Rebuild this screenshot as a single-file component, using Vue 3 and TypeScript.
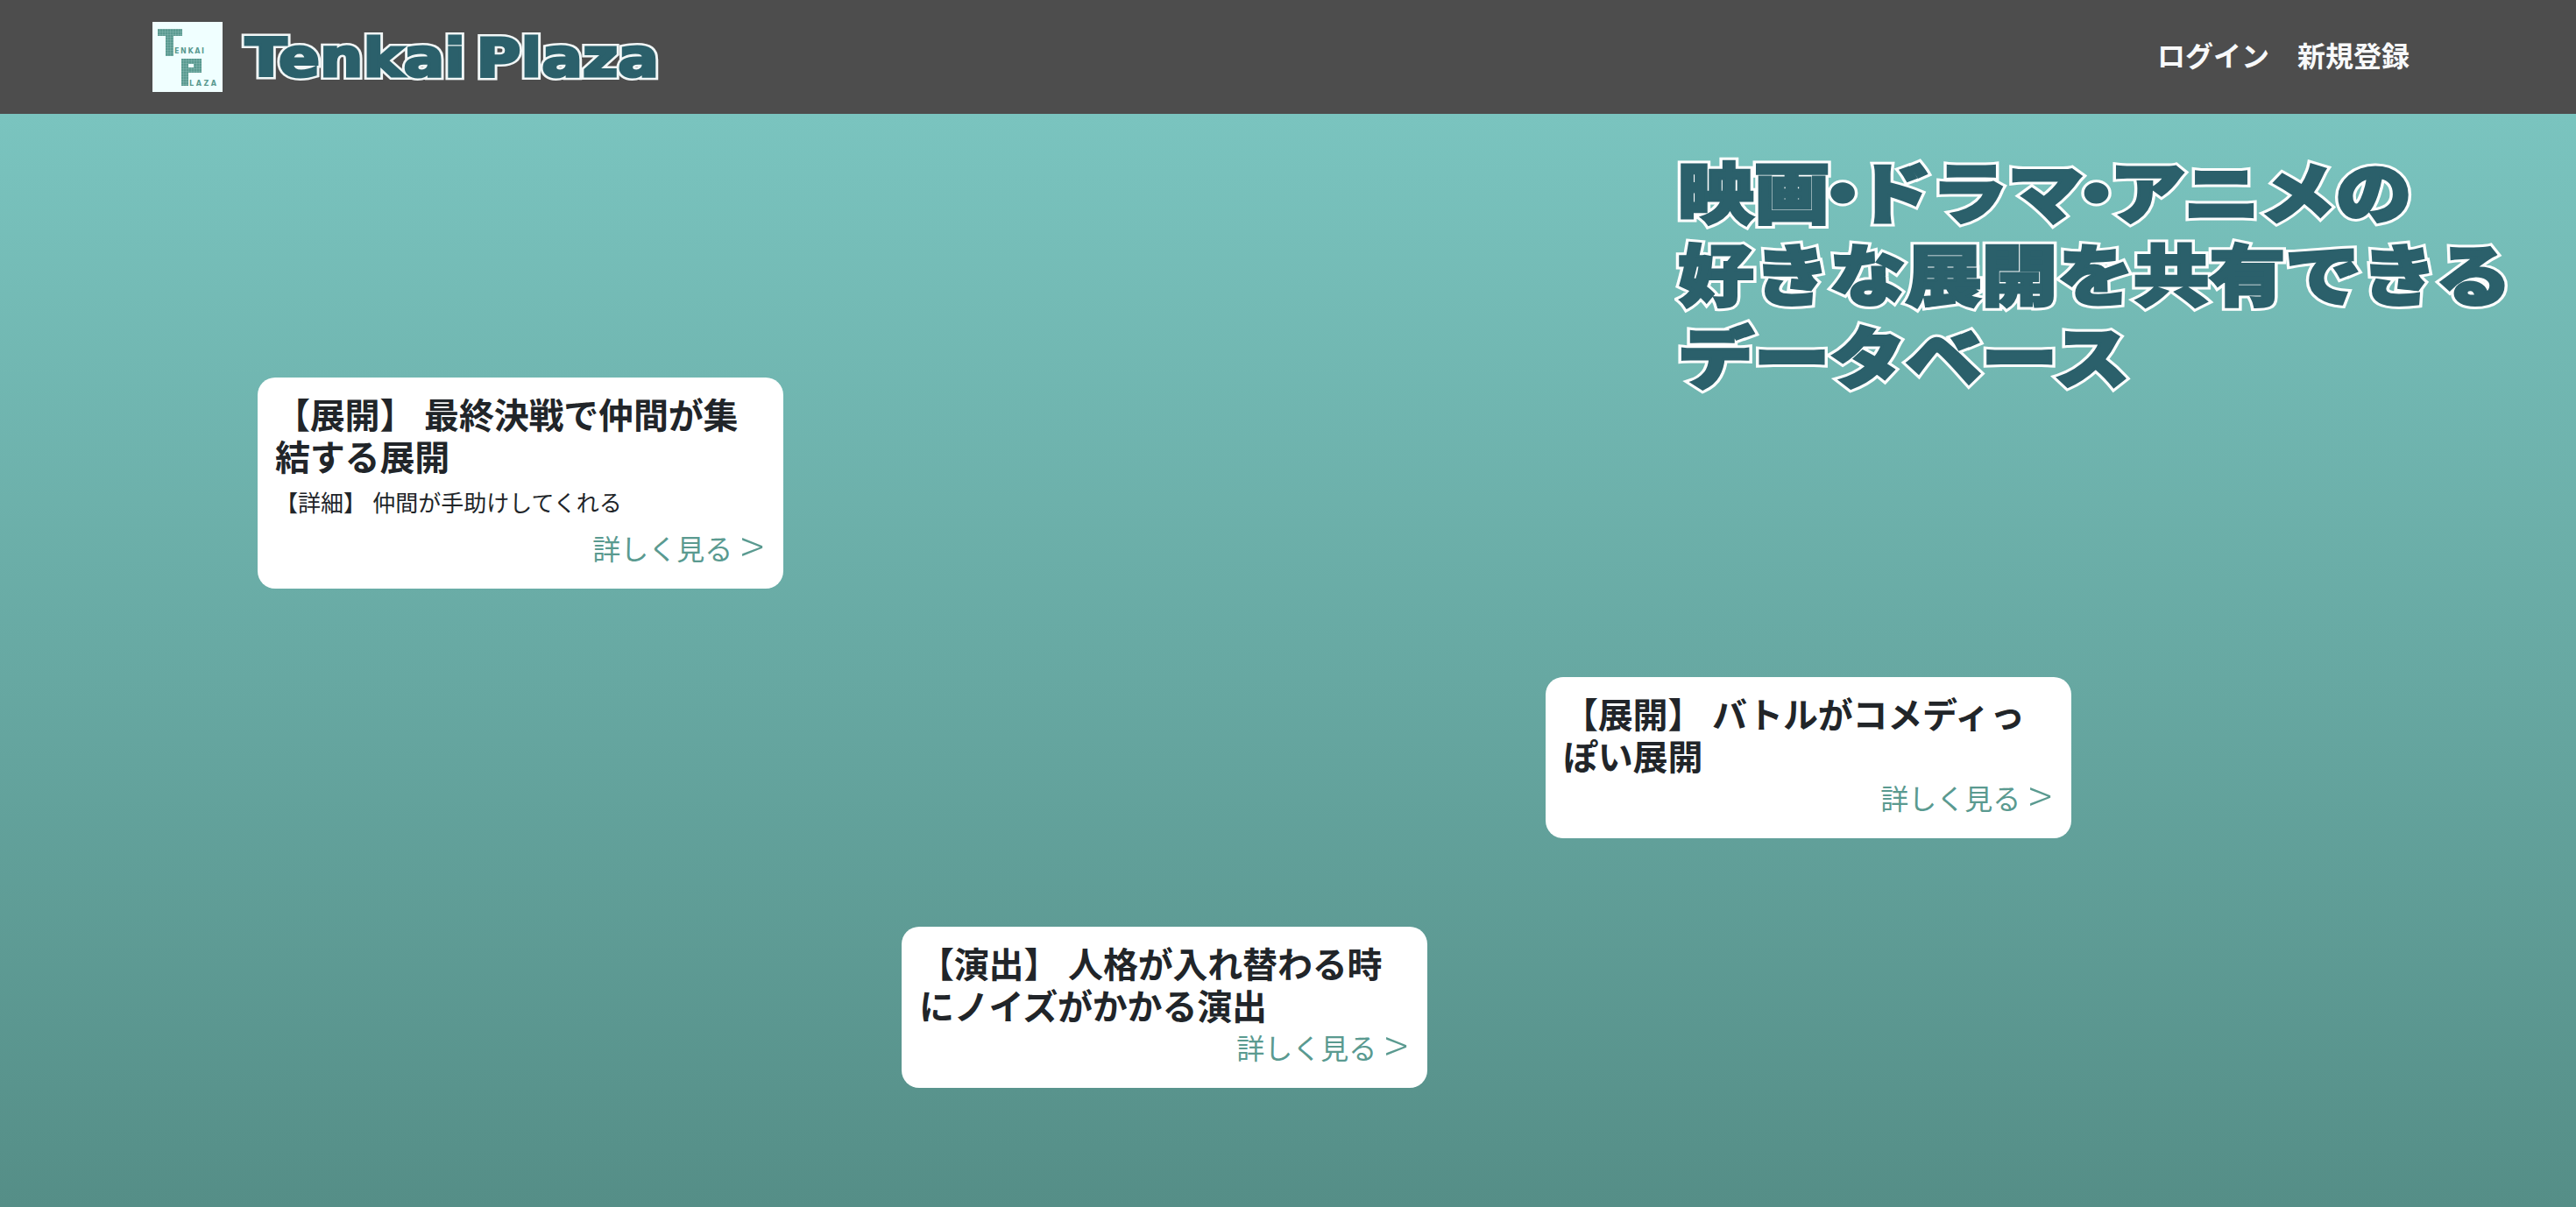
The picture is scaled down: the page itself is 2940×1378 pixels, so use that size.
<script setup lang="ts">
interface PlotCard {
  id: number;
  title: string;
  detail?: string;
  left: number;
  top: number;
}

// カードは自由配置なので座標はデータで持つ
const cards: PlotCard[] = [
  { id: 1, title: "【展開】 最終決戦で仲間が集結する展開", detail: "【詳細】 仲間が手助けしてくれる", left: 294, top: 301 },
  { id: 2, title: "【展開】 バトルがコメディっぽい展開", left: 1764, top: 643 },
  { id: 3, title: "【演出】 人格が入れ替わる時にノイズがかかる演出", left: 1029, top: 928 },
];

const catchLines = [
  ["映画", "・", "ドラマ", "・", "アニメの"],
  ["好きな展開を共有できる"],
  ["データベース"],
];
</script>

<template>
  <div class="page">
    <header class="header">
      <a class="brand" href="#">
        <svg class="logo" viewBox="0 0 80 80" role="img" aria-label="Tenkai Plaza">
          <defs>
            <pattern id="cells" width="3" height="3" patternUnits="userSpaceOnUse">
              <rect width="3" height="3" fill="#5a9a90" />
              <path d="M3 0V3H0" fill="none" stroke="#a8d0ca" stroke-width="0.5" />
            </pattern>
          </defs>
          <rect width="80" height="80" fill="#f0ffff" />
          <path d="M6 8H34V16H24V39H15V16H6Z" fill="url(#cells)" />
          <path fill-rule="evenodd" d="M33 42H56V58H41V73H33ZM41 48V52H47V48Z" fill="url(#cells)" />
          <text class="logo-text" x="25" y="36" textLength="34">ENKAI</text>
          <text class="logo-text" x="42" y="73" textLength="31">LAZA</text>
        </svg>
        <span class="wordmark" data-text="Tenkai Plaza">Tenkai Plaza</span>
      </a>
      <nav class="nav">
        <a href="#">ログイン</a>
        <a href="#">新規登録</a>
      </nav>
    </header>

    <main class="main">
      <div class="hero">
        <h1 class="catch">
          <span v-for="(line, i) in catchLines" :key="i" class="catch-line">
            <span
              v-for="(part, j) in line"
              :key="j"
              class="catch-part"
              :class="{ dot: part === '・' }"
              :data-text="part"
            >{{ part }}</span>
          </span>
        </h1>
      </div>

      <article
        v-for="card in cards"
        :key="card.id"
        class="card"
        :style="{ left: card.left + 'px', top: card.top + 'px' }"
      >
        <h5 class="card-title">{{ card.title }}</h5>
        <p v-if="card.detail" class="card-detail">{{ card.detail }}</p>
        <a class="card-link" href="#">詳しく見る <span class="chevron">&gt;</span></a>
      </article>
    </main>
  </div>
</template>

<style>
body {
  margin: 0;
}
</style>

<style scoped>
.page {
  min-height: 1378px;
  display: flex;
  flex-direction: column;
  font-family: "Liberation Sans", "Noto Sans CJK JP", sans-serif;
  color: #212529;
}

.header {
  height: 130px;
  box-sizing: border-box;
  padding: 0 190px 0 174px;
  display: flex;
  align-items: center;
  justify-content: space-between;
  background: #4d4d4d;
}

.brand {
  display: flex;
  align-items: center;
  gap: 26px;
  text-decoration: none;
}

.logo {
  width: 80px;
  height: 80px;
  display: block;
}

.logo-text {
  font-family: "DejaVu Sans", sans-serif;
  font-size: 8px;
  font-weight: 700;
  fill: #5a9a90;
}

/* 白フチは疑似要素で背面に重ねる */
.wordmark {
  position: relative;
  z-index: 0;
  display: inline-block;
  margin-top: 2px;
  font-family: "DejaVu Sans", sans-serif;
  font-size: 60px;
  font-weight: 700;
  line-height: 1;
  word-spacing: -10px;
  white-space: nowrap;
  color: #2b606b;
  -webkit-text-stroke: 3px #2b606b;
  transform: scaleX(1.155);
  transform-origin: left center;
}

.wordmark::before {
  content: attr(data-text);
  position: absolute;
  left: 0;
  top: 0;
  z-index: -1;
  -webkit-text-stroke: 8px #f2f7f7;
}

.nav {
  display: flex;
  gap: 32px;
  padding-bottom: 6px;
}

.nav a {
  font-size: 32px;
  font-weight: 700;
  color: #f8f9fa;
  text-decoration: none;
}

.main {
  position: relative;
  flex: 1;
  display: flex;
  justify-content: flex-end;
  background: linear-gradient(180deg, #7ac4bf 0%, #558e87 100%);
}

.hero {
  width: 1025px;
  padding-top: 39px;
}

.catch {
  margin: 0;
  font-family: "Noto Sans CJK JP", sans-serif;
  font-size: 76px;
  font-weight: 900;
  line-height: 94px;
  color: #2b606b;
}

.catch-line {
  display: block;
  position: relative;
  z-index: 0;
  white-space: nowrap;
  transform: scaleX(1.14);
  transform-origin: left center;
}

.catch-part {
  position: relative;
  display: inline-block;
  -webkit-text-stroke: 3px #2b606b;
}

.catch-part::before {
  content: attr(data-text);
  position: absolute;
  left: 0;
  top: 0;
  z-index: -1;
  -webkit-text-stroke: 9px #ffffff;
}

.dot {
  margin: 0 -25px;
}

.card {
  position: absolute;
  width: 600px;
  box-sizing: border-box;
  padding: 20px;
  display: flex;
  flex-direction: column;
  background: #ffffff;
  border-radius: 20px;
}

.card-title {
  margin: 0;
  font-size: 40px;
  font-weight: 700;
  line-height: 48px;
  letter-spacing: -0.2px;
}

.card-detail {
  margin: 9px 0 10px;
  font-size: 26px;
  line-height: 38px;
}

.card-link {
  align-self: flex-end;
  margin-right: 2px;
  font-size: 32px;
  line-height: 48px;
  color: #5a9a90;
  text-decoration: none;
}

.chevron {
  font-family: "Noto Sans CJK JP", sans-serif;
  font-size: 50px;
  font-weight: 300;
  line-height: 0;
  vertical-align: -4px;
}
</style>
